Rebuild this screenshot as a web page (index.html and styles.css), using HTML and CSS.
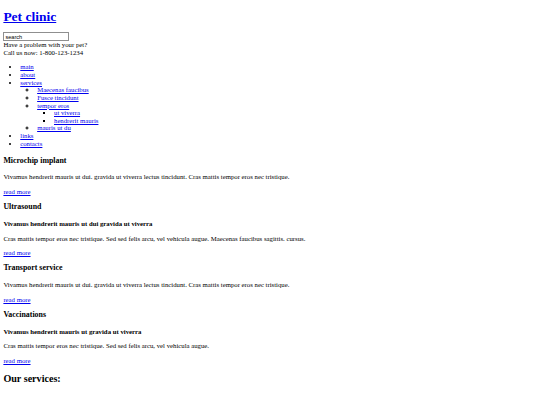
FILE: index.html
```html
<!DOCTYPE html>
<html lang="en">
<head>
<meta charset="utf-8">
<title>Pet clinic</title>
<link rel="stylesheet" href="styles.css">
</head>
<body>
<header class="header">
  <h1 class="logo"><a href="#">Pet clinic</a></h1>
  <form class="search"><input class="search-input" type="text" value="search"></form>
  <div class="contact">Have a problem with your pet?<br>Call us now: 1-800-123-1234</div>
</header>
<nav class="nav">
  <ul class="menu">
    <li><a href="#">main</a></li>
    <li><a href="#">about</a></li>
    <li><a href="#">services</a>
      <ul class="sub">
        <li><a href="#">Maecenas faucibus</a></li>
        <li><a href="#">Fusce tincidunt</a></li>
        <li><a href="#">tempor eros</a>
          <ul class="subsub">
            <li><a href="#">ut viverra</a></li>
            <li><a href="#">hendrerit mauris</a></li>
          </ul>
        </li>
        <li><a href="#">mauris ut du</a></li>
      </ul>
    </li>
    <li><a href="#">links</a></li>
    <li><a href="#">contacts</a></li>
  </ul>
</nav>
<main class="content">
  <article class="post">
    <h3 class="post-title">Microchip implant</h3>
    <p>Vivamus hendrerit mauris ut dui. gravida ut viverra lectus tincidunt. Cras mattis tempor eros nec tristique.</p>
    <a href="#">read more</a>
  </article>
  <article class="post">
    <h3 class="post-title">Ultrasound</h3>
    <p class="post-sub">Vivamus hendrerit mauris ut dui gravida ut viverra</p>
    <p>Cras mattis tempor eros nec tristique. Sed sed felis arcu, vel vehicula augue. Maecenas faucibus sagittis. cursus.</p>
    <a href="#">read more</a>
  </article>
  <article class="post">
    <h3 class="post-title">Transport service</h3>
    <p>Vivamus hendrerit mauris ut dui. gravida ut viverra lectus tincidunt. Cras mattis tempor eros nec tristique.</p>
    <a href="#">read more</a>
  </article>
  <article class="post">
    <h3 class="post-title">Vaccinations</h3>
    <p class="post-sub">Vivamus hendrerit mauris ut gravida ut viverra</p>
    <p>Cras mattis tempor eros nec tristique. Sed sed felis arcu, vel vehicula augue.</p>
    <a href="#">read more</a>
  </article>
  <h2 class="services-title">Our services:</h2>
</main>
</body>
</html>
```
FILE: styles.css
```css
html {
  background: #ffffff;
}
body {
  margin: 0.5em;
  font-family: "Liberation Serif", "Times New Roman", serif;
  font-size: 6.75px;
  line-height: 1.13;
  color: #000000;
}
a {
  color: #0000ee;
}
.logo {
  font-size: 2em;
  margin: 0.42em 0 0.6em;
}
.search {
  margin: 0;
}
.search-input {
  box-sizing: border-box;
  width: 66px;
  height: 9px;
  padding: 0 1px;
  font-family: "Liberation Sans", Arial, sans-serif;
  font-size: 5.6px;
  color: #000000;
  background: #ffffff;
  border: 1px solid #8f8f8f;
  border-radius: 0;
  margin: 0;
  vertical-align: top;
}
.contact {
  margin: 0;
}
.menu {
  margin: 1em 0 1.4em;
  padding-left: 2.5em;
  list-style-type: disc;
}
.menu ul {
  padding-left: 2.5em;
  margin: 0;
}
.menu .sub {
  list-style-type: circle;
}
.menu .subsub {
  list-style-type: square;
}
.post-title {
  font-size: 1.17em;
  margin: 1em 0;
}
.post p {
  margin: 1em 0;
}
.post .post-sub {
  font-weight: bold;
}
.services-title {
  font-size: 1.5em;
  margin: 0.83em 0;
}
```
